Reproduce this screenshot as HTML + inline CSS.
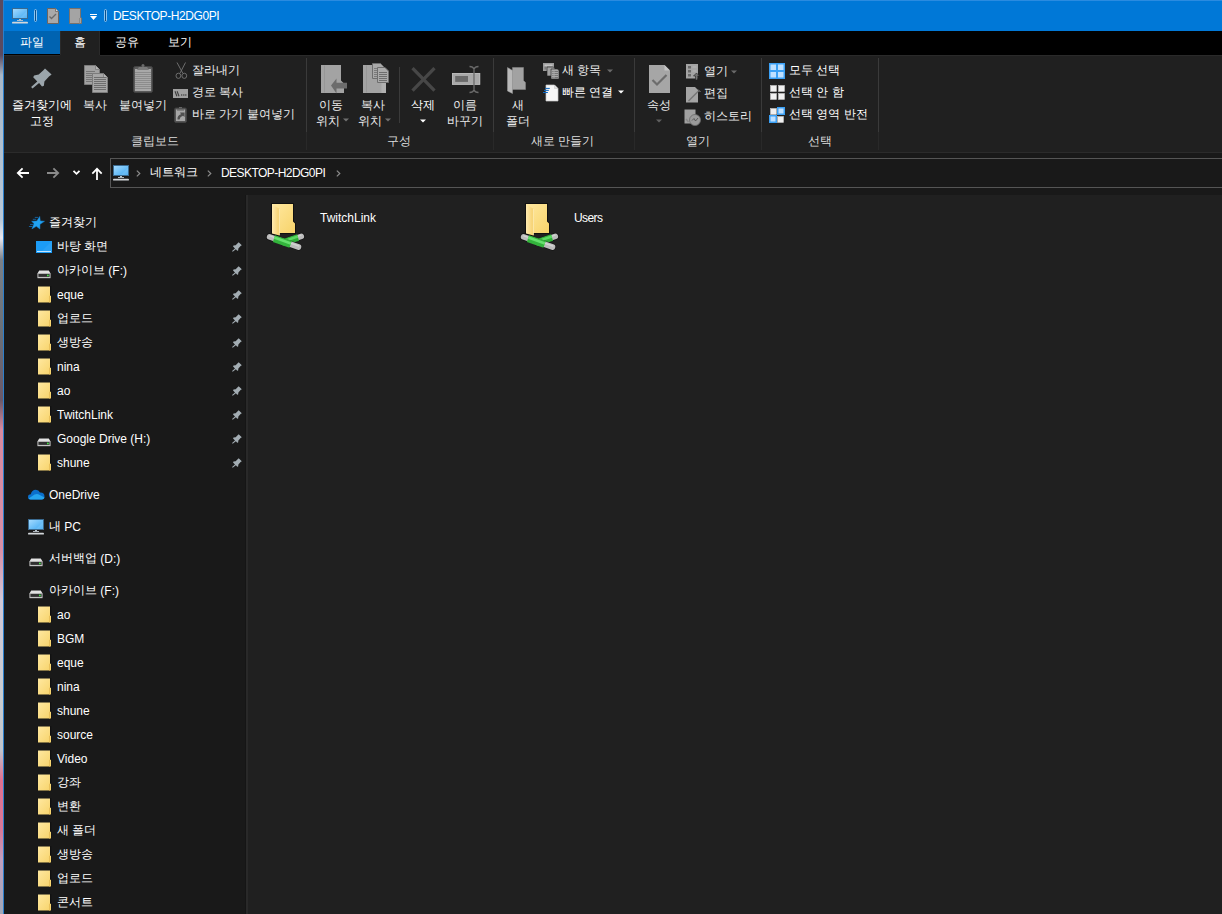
<!DOCTYPE html>
<html><head><meta charset="utf-8">
<style>
*{margin:0;padding:0;box-sizing:border-box}
html,body{width:1222px;height:914px;overflow:hidden;background:#191919}
body{position:relative;font-family:"Liberation Sans",sans-serif;font-size:12px;color:#fff}
.a{position:absolute}
.t{position:absolute;white-space:nowrap;line-height:14px}
.g{color:#ececec}
.gl{color:#dedede}
.e{position:relative;top:1px}
svg{position:absolute;overflow:visible}
</style></head><body>
<svg width="0" height="0" style="position:absolute">
<defs>
<linearGradient id="scr" x1="0" y1="0" x2="1" y2="1"><stop offset="0" stop-color="#a8dcff"/><stop offset="1" stop-color="#39a6f2"/></linearGradient>
<linearGradient id="fy" x1="0" y1="0" x2="1" y2="1"><stop offset="0" stop-color="#ffe8a0"/><stop offset="1" stop-color="#f7d36a"/></linearGradient>
<linearGradient id="fy2" x1="0" y1="0" x2="1" y2="0"><stop offset="0" stop-color="#ffeab0"/><stop offset="1" stop-color="#f5cf6a"/></linearGradient>
<linearGradient id="gr" x1="0" y1="0" x2="0" y2="1"><stop offset="0" stop-color="#8ee07e"/><stop offset="0.5" stop-color="#36c23a"/><stop offset="1" stop-color="#1e8f2a"/></linearGradient>
<linearGradient id="gy" x1="0" y1="0" x2="0" y2="1"><stop offset="0" stop-color="#e8e8e8"/><stop offset="1" stop-color="#9a9a9a"/></linearGradient>
<symbol id="pc" viewBox="0 0 16 16">
 <rect x="0.5" y="0.5" width="15" height="10" fill="url(#scr)" stroke="#3a6a90" stroke-width="1"/>
 <path d="M8 10 L15 3 V10 Z" fill="#fff" opacity="0.12"/>
 <rect x="7" y="11" width="2" height="1.2" fill="#b8c4cc"/>
 <rect x="5" y="12" width="6" height="0.9" fill="#c0c8d0"/>
 <rect x="0" y="13.8" width="16" height="1.8" rx="0.9" fill="#d2d6da"/>
</symbol>
<symbol id="pin" viewBox="0 0 21 21">
 <path d="M14 0.4 L20.6 6.6 L18 8.6 L13.4 13.6 L12.9 17.7 L11 18.4 L8.1 15.1 L1.5 20.4 L0.1 19.1 L6.3 13.6 L2.2 9.2 L3.1 7.4 L7.7 6.6 L12.4 2.2 Z"/>
</symbol>
<symbol id="fold" viewBox="0 0 14 17">
 <rect x="0" y="0" width="14" height="17" fill="#0c0c0c" opacity="0.6"/>
 <path d="M0.5 0.5 H12.5 V9.5 L13.5 10 V16.5 H0.5 Z" fill="url(#fy)"/>
 <path d="M11.5 10 L12.5 9.5 V16.5 H11.5 Z" fill="#e9c05a"/>
</symbol>
<symbol id="drv" viewBox="0 0 14 9">
 <path d="M1.8 0 H12.2 L14 3.2 V8.6 H0 V3.2 Z" fill="#0a0a0a" opacity="0.6"/>
 <path d="M2.2 0.4 H11.8 L13.6 3.4 H0.4 Z" fill="#e2e2e2"/>
 <rect x="0.4" y="3.2" width="13.2" height="5" fill="#c4c4c4"/>
 <rect x="1.4" y="4" width="11.2" height="2.9" fill="#303030"/>
 <circle cx="10.9" cy="5.45" r="0.9" fill="#44f04a"/>
</symbol>
<symbol id="netf" viewBox="0 0 44 56">
 <path d="M6 5 H29 V23 L31 25.5 V36 H15 V38.5 L6 36.5 Z" fill="#0b0b0b" opacity="0.75"/>
 <path d="M7 6 H28 V23.5 L30 25.5 V35 H7 Z" fill="url(#fy)"/>
 <path d="M7 6.2 L14.6 11 V37.4 L7 35.5 Z" fill="url(#fy2)"/>
 <path d="M14.4 11 V37.2" stroke="#fff1c4" stroke-width="0.7"/>
 <path d="M18.3 44.4 L36.3 38.3" stroke="#050505" stroke-width="7" stroke-linecap="round" opacity="0.5"/>
 <path d="M18.3 44.4 L36.3 38.3" stroke="#bcbcbc" stroke-width="5.6" stroke-linecap="round"/>
 <path d="M18 43.3 L36 37.2" stroke="#d2d2d2" stroke-width="1.4" stroke-linecap="round"/>
 <path d="M17 44.9 L33 39.5" stroke="#2fae38" stroke-width="6.8"/>
 <path d="M16.8 43.9 L32.8 38.5" stroke="#5ad862" stroke-width="2.4"/>
 <path d="M4.6 38.9 L33.5 49" stroke="#050505" stroke-width="7" stroke-linecap="round" opacity="0.5"/>
 <path d="M4.6 38.9 L33.5 49" stroke="#bcbcbc" stroke-width="5.6" stroke-linecap="round"/>
 <path d="M4.9 37.9 L33.8 48" stroke="#d2d2d2" stroke-width="1.4" stroke-linecap="round"/>
 <path d="M9 40.6 L25.6 46.4" stroke="#33b43c" stroke-width="7"/>
 <path d="M9.3 39.6 L25.9 45.4" stroke="#66e06e" stroke-width="2.6"/>
</symbol>
</defs>
</svg>
<!-- desktop strip -->
<div class="a" style="left:0;top:0;width:3px;height:914px;background:linear-gradient(#5a4a60 0,#5a4a60 55px,#a8b8c8 75px,#b8c8d8 220px,#e8e8f0 238px,#7a8088 260px,#6a7078 330px,#6a5868 400px,#d88aa0 430px,#d890a8 550px,#d0c8d8 600px,#c8ccd0 700px,#c0c4cc 750px,#e07090 780px,#d87898 830px,#c0a0c0 860px,#a0a8b8 914px)"></div>
<div class="a" style="left:3px;top:0;width:1px;height:914px;background:#2b7fcb"></div>

<!-- title bar -->
<div class="a" style="left:4px;top:0;width:1218px;height:31px;background:#0078d7"></div>
<div class="a" style="left:4px;top:0;width:1218px;height:1px;background:#2a8be0"></div>
<svg style="left:12px;top:8px" width="16" height="16"><use href="#pc"/></svg>
<div class="a" style="left:34px;top:9px;width:3px;height:13px;border:1px solid #8cc4f0;border-radius:1.5px;background:#0a4f8a"></div>
<svg style="left:47px;top:8px" width="12" height="16" viewBox="0 0 12 16">
 <path d="M0.5 0.5 H8.5 L11.5 3.5 V15.5 H0.5 Z" fill="#a9a9a9" stroke="#6d6560" stroke-width="1"/>
 <path d="M8.5 0.5 V3.5 H11.5" fill="#d8d8d8" stroke="#6d6560" stroke-width="0.8"/>
 <path d="M2.5 8.5 L4.5 10.5 L9 6" fill="none" stroke="#6a6a6a" stroke-width="1.3"/>
</svg>
<svg style="left:69px;top:8px" width="13" height="16" viewBox="0 0 13 16">
 <path d="M0.5 0.5 H11.5 V9.5 L12.5 10 V15.5 H0.5 Z" fill="#a4a4a4" stroke="#7a726c" stroke-width="1"/>
 <path d="M10.5 10 V15.5" stroke="#8a8a8a" stroke-width="1"/>
</svg>
<div class="a" style="left:90px;top:14px;width:7px;height:1px;background:#fff"></div>
<svg style="left:90px;top:16px" width="7" height="4" viewBox="0 0 7 4"><path d="M0 0 H7 L3.5 4 Z" fill="#fff"/></svg>
<div class="a" style="left:104px;top:9px;width:3px;height:13px;border:1px solid #8cc4f0;border-radius:1.5px;background:#0a4f8a"></div>
<div class="t" style="left:113px;top:9px;letter-spacing:-0.42px">DESKTOP-H2DG0PI</div>

<!-- tabs -->
<div class="a" style="left:4px;top:31px;width:1218px;height:24px;background:#000"></div>
<div class="a" style="left:4px;top:31px;width:56px;height:23px;background:#0063b1"></div>
<div class="a" style="left:60px;top:31px;width:40px;height:25px;background:#202020"></div>
<div class="t" style="left:20px;top:35px">파일</div>
<div class="t" style="left:74px;top:35px">홈</div>
<div class="t" style="left:115px;top:35px">공유</div>
<div class="t" style="left:168px;top:35px">보기</div>

<!-- ribbon -->
<div class="a" style="left:4px;top:55px;width:1218px;height:97px;background:#202020"></div>
<div class="a" style="left:4px;top:55px;width:56px;height:1px;background:#2a2a2a"></div>
<div class="a" style="left:100px;top:55px;width:1122px;height:1px;background:#2a2a2a"></div>
<div class="a" style="left:60px;top:31px;width:1px;height:24px;background:#2a2a2a"></div>
<div class="a" style="left:99px;top:31px;width:1px;height:24px;background:#2a2a2a"></div>
<div class="a" style="left:4px;top:152px;width:1218px;height:1px;background:#2b2b2b"></div>

<!-- address row -->
<div class="a" style="left:4px;top:153px;width:1218px;height:42px;background:#191919"></div>
<div class="a" style="left:110px;top:158px;width:1120px;height:30px;border:1px solid #555;background:#191919"></div>

<!-- nav pane -->
<div class="a" style="left:4px;top:195px;width:243px;height:719px;background:#191919"></div>
<!-- content -->
<div class="a" style="left:247px;top:195px;width:975px;height:719px;background:#202020"></div>
<!-- ===== clipboard group ===== -->
<svg style="left:31px;top:68px;fill:#9ba5ab" width="21" height="21"><use href="#pin"/></svg>
<div class="t" style="left:12px;top:98px">즐겨찾기에</div>
<div class="t" style="left:30px;top:114px">고정</div>
<!-- copy icon -->
<svg style="left:84px;top:65px" width="24" height="28" viewBox="0 0 24 28">
 <path d="M0.5 0.5 H11.5 L15.5 4.5 V19.5 H0.5 Z" fill="#a2a2a2" stroke="#7c7c7c"/>
 <path d="M11.5 0.5 V4.5 H15.5" fill="#b4b4b4" stroke="#7c7c7c" stroke-width="0.8"/>
 <g stroke="#767676" stroke-width="1"><path d="M2 6.5 H11 M2 8.5 H11 M2 10.5 H11 M2 12.5 H11 M2 14.5 H11 M2 16.5 H11"/></g>
 <path d="M8.5 8.5 H19.5 L23.5 12.5 V27.5 H8.5 Z" fill="#a6a6a6" stroke="#7c7c7c"/>
 <path d="M19.5 8.5 V12.5 H23.5" fill="#b4b4b4" stroke="#7c7c7c" stroke-width="0.8"/>
 <g stroke="#6e6e6e" stroke-width="1"><path d="M10 12.5 H22 M10 14.5 H22 M10 16.5 H22 M10 18.5 H22 M10 20.5 H22 M10 22.5 H22 M10 24.5 H22"/></g>
</svg>
<div class="t g" style="left:83px;top:98px">복사</div>
<!-- paste icon -->
<svg style="left:133px;top:63px" width="20" height="30" viewBox="0 0 20 30">
 <rect x="0.5" y="3.5" width="19" height="26" rx="2" fill="#5a5a5a" stroke="#444"/>
 <rect x="2" y="6" width="16" height="22" fill="#a8a8a8"/>
 <g stroke="#8c8c8c" stroke-width="1"><path d="M2 9.5 H18 M2 11.5 H18 M2 13.5 H18 M2 15.5 H18 M2 17.5 H18 M2 19.5 H18 M2 21.5 H18 M2 23.5 H18 M2 25.5 H18"/></g>
 <path d="M4 7 L6 4 H14 L16 7 Z" fill="#7a7a7a"/>
 <rect x="8.5" y="1" width="3" height="3" rx="1.5" fill="#6a6a6a"/>
</svg>
<div class="t g" style="left:119px;top:98px">붙여넣기</div>
<!-- scissors -->
<svg style="left:175px;top:62px" width="13" height="17" viewBox="0 0 13 17" fill="none" stroke="#767676" stroke-width="0.9">
 <path d="M2 0.5 L7.8 11.2 M10.5 0.5 L5 11.2"/>
 <ellipse cx="3.4" cy="13.8" rx="2.4" ry="2.6"/><ellipse cx="9.3" cy="13.8" rx="2.4" ry="2.6"/>
</svg>
<div class="t g" style="left:192px;top:63px">잘라내기</div>
<!-- copy path -->
<svg style="left:173px;top:89px" width="15" height="9" viewBox="0 0 15 9">
 <rect x="0" y="0" width="15" height="9" fill="#a0a0a0"/>
 <path d="M2 2.2 L3.9 7.2 M4.1 2.2 L6 7.2" stroke="#3c3c3c" stroke-width="1.1"/>
 <g fill="#3c3c3c"><circle cx="8.7" cy="5.9" r="0.75"/><circle cx="10.8" cy="5.9" r="0.75"/><circle cx="12.8" cy="5.9" r="0.75"/></g>
</svg>
<div class="t g" style="left:192px;top:85px">경로 복사</div>
<!-- paste shortcut -->
<svg style="left:174px;top:107px" width="13" height="16" viewBox="0 0 13 16">
 <rect x="0.5" y="1" width="12" height="14.5" rx="1.5" fill="#555" stroke="#444" stroke-width="0.8"/>
 <rect x="2" y="2.5" width="9" height="11.5" fill="#a6a6a6"/>
 <rect x="3" y="2.5" width="7" height="1" fill="#5a5a5a"/>
 <rect x="5" y="0" width="3" height="1.2" fill="#666"/>
 <path d="M3.5 12.5 Q3 8.5 7 7.2 L6 5.6 H10.6 V10 L9 8.8 Q6 9.5 5.5 12.5 Z" fill="#505050"/>
</svg>
<div class="t g" style="left:192px;top:107px">바로 가기 붙여넣기</div>
<div class="t gl" style="left:131px;top:134px">클립보드</div>
<div class="a" style="left:306px;top:58px;width:1px;height:74px;background:#3a3a3a"></div><div class="a" style="left:306px;top:132px;width:1px;height:18px;background:#292929"></div>

<!-- ===== organize group ===== -->
<svg style="left:321px;top:65px" width="28" height="30" viewBox="0 0 28 30">
 <path d="M0 0 H20 V15.5 L23 18.5 V28 H0 Z" fill="#a3a3a3"/>
 <path d="M3.5 0.5 V27.5" stroke="#979797" stroke-width="1"/>
 <path d="M10 20.5 L15.5 13.5 V17.8 H26 V23.5 H15.5 V28.5 Z" fill="#6c6c6c"/>
</svg>
<div class="t g" style="left:319px;top:98px">이동</div>
<div class="t g" style="left:316px;top:114px">위치</div>
<svg style="left:343px;top:118px" width="6" height="4" viewBox="0 0 6 4"><path d="M0 0.5 H6 L3 3.5 Z" fill="#707070"/></svg>
<svg style="left:362px;top:62px" width="28" height="32" viewBox="0 0 28 32">
 <path d="M1 3 H21 V18.5 L24 21.5 V31 H1 Z" fill="#a3a3a3"/>
 <path d="M4.5 3.5 V30.5" stroke="#979797" stroke-width="1"/>
 <path d="M19.5 21 H24 V31 H19.5 Z" fill="#b0b0b0"/>
 <path d="M10.5 1.5 H18.5 L21.5 4.5 V16.5 H10.5 Z" fill="#a8a8a8" stroke="#6e6e6e"/>
 <g stroke="#7a7a7a"><path d="M12 6.5 H19.5 M12 8.5 H19.5 M12 10.5 H19.5 M12 12.5 H19.5 M12 14.5 H19.5"/></g>
 <path d="M15.5 5.5 H23 L26.5 9 V20.5 H15.5 Z" fill="#ababab" stroke="#6e6e6e"/>
 <g stroke="#6e6e6e"><path d="M17 10.5 H25 M17 12.5 H25 M17 14.5 H25 M17 16.5 H25 M17 18.5 H25"/></g>
</svg>
<div class="t g" style="left:361px;top:98px">복사</div>
<div class="t g" style="left:358px;top:114px">위치</div>
<svg style="left:385px;top:118px" width="6" height="4" viewBox="0 0 6 4"><path d="M0 0.5 H6 L3 3.5 Z" fill="#707070"/></svg>
<div class="a" style="left:399px;top:67px;width:1px;height:56px;background:#3a3a3a"></div>
<svg style="left:411px;top:67px" width="25" height="25" viewBox="0 0 25 25">
 <path d="M1.5 1.2 L23.5 23.6 M23.5 1.2 L1.5 23.6" stroke="#474747" stroke-width="3.3"/>
</svg>
<div class="t" style="left:411px;top:98px">삭제</div>
<svg style="left:420px;top:119px" width="6" height="4" viewBox="0 0 6 4"><path d="M0 0.5 H6 L3 3.5 Z" fill="#fff"/></svg>
<svg style="left:452px;top:66px" width="29" height="27" viewBox="0 0 29 27">
 <rect x="0" y="7" width="28.2" height="11.8" fill="#a8a8a8"/>
 <rect x="0.5" y="7.5" width="27.2" height="10.8" fill="none" stroke="#bcbcbc" stroke-width="0.8"/>
 <rect x="3.2" y="10" width="12.8" height="5.9" fill="#6a6a6a"/>
 <path d="M17.5 0.5 Q21 0.5 22 3 Q23 0.5 26.5 0.5 M22 3 V24 M17.5 26.5 Q21 26.5 22 24 Q23 26.5 26.5 26.5" fill="none" stroke="#6a6a6a" stroke-width="1.3"/>
</svg>
<div class="t g" style="left:453px;top:98px">이름</div>
<div class="t g" style="left:447px;top:114px">바꾸기</div>
<div class="t gl" style="left:387px;top:134px">구성</div>
<div class="a" style="left:493px;top:58px;width:1px;height:74px;background:#3a3a3a"></div><div class="a" style="left:493px;top:132px;width:1px;height:18px;background:#292929"></div>

<!-- ===== new group ===== -->
<svg style="left:507px;top:67px" width="20" height="27" viewBox="0 0 20 27">
 <path d="M5.5 0.5 H16.5 V13.5 L18.5 15.5 V22.5 H5.5 Z" fill="#a2a2a2" stroke="#8c8c8c" stroke-width="0.5"/>
 <path d="M0.5 0.5 L5.5 3.5 V26.5 L0.5 24 Z" fill="#b9b9b9" stroke="#9a9a9a" stroke-width="0.5"/>
</svg>
<div class="t g" style="left:512px;top:98px">새</div>
<div class="t g" style="left:506px;top:114px">폴더</div>
<svg style="left:543px;top:63px" width="16" height="17" viewBox="0 0 16 17">
 <rect x="0" y="0" width="11" height="8" fill="#9c9c9c"/>
 <rect x="1.5" y="1.5" width="8" height="1.5" fill="#c4c4c4"/>
 <rect x="1.5" y="4" width="1.5" height="2.5" fill="#7a7a7a"/>
 <path d="M4 4 H10.5 L12 5.5 V13 H4 Z" fill="#a2a2a2" stroke="#202020" stroke-width="0.6"/>
 <path d="M8 6 H14.5 L16 7.5 V16 H8 Z" fill="#a8a8a8" stroke="#202020" stroke-width="0.6"/>
 <g stroke="#6e6e6e" stroke-width="0.9"><path d="M9.3 8.5 H10.5 M11.5 8.5 H15 M9.3 10.5 H10.5 M11.5 10.5 H15 M9.3 12.5 H10.5 M11.5 12.5 H15 M9.3 14.5 H10.5 M11.5 14.5 H15"/></g>
</svg>
<div class="t g" style="left:562px;top:63px">새 항목</div>
<svg style="left:607px;top:69px" width="6" height="4" viewBox="0 0 6 4"><path d="M0 0.5 H6 L3 3.5 Z" fill="#6a6a6a"/></svg>
<svg style="left:543px;top:84px" width="16" height="18" viewBox="0 0 16 18">
 <path d="M3 1 H11.5 L15 4.5 V17 H3 Z" fill="#f6f6f6" stroke="#c8c8c8" stroke-width="0.7"/>
 <path d="M11.5 1 V4.5 H15" fill="#e0e0e0" stroke="#c8c8c8" stroke-width="0.6"/>
 <path d="M2.2 4.4 H6.8 M1 6.4 H5.8 M0 8.5 H4.9" stroke="#0b66c2" stroke-width="1"/>
</svg>
<div class="t" style="left:562px;top:85px">빠른 연결</div>
<svg style="left:618px;top:90px" width="6" height="4" viewBox="0 0 6 4"><path d="M0 0.5 H6 L3 3.5 Z" fill="#fff"/></svg>
<div class="t gl" style="left:531px;top:134px">새로 만들기</div>
<div class="a" style="left:634px;top:58px;width:1px;height:74px;background:#3a3a3a"></div><div class="a" style="left:634px;top:132px;width:1px;height:18px;background:#292929"></div>

<!-- ===== open group ===== -->
<svg style="left:649px;top:65px" width="22" height="29" viewBox="0 0 22 29">
 <path d="M0 0 H15.5 L21 5.5 V28 H0 Z" fill="#a6a6a6"/>
 <path d="M15.5 0 V5.5 H21 Z" fill="#c4c4c4"/>
 <path d="M3.5 15 L8 19.5 L17.5 10" fill="none" stroke="#6c6c6c" stroke-width="2.2"/>
</svg>
<div class="t g" style="left:647px;top:98px">속성</div>
<svg style="left:656px;top:119px" width="6" height="4" viewBox="0 0 6 4"><path d="M0 0.5 H6 L3 3.5 Z" fill="#606060"/></svg>
<svg style="left:686px;top:64px" width="15" height="17" viewBox="0 0 15 17">
 <rect x="0" y="0" width="12" height="14.5" fill="#a4a4a4"/>
 <g fill="#6a6a6a"><rect x="2" y="2" width="3" height="2.5"/><rect x="2" y="6" width="3" height="2.5"/><rect x="2" y="10" width="3" height="2.5"/></g>
 <g stroke="#bdbdbd" stroke-width="0.8"><path d="M6.5 3 H10.5 M6.5 7 H10.5"/></g>
 <path d="M9.5 16 V12 H7.5 L10.5 9 L13.5 12 H11.5 V16 Z" fill="#747474" stroke="#202020" stroke-width="0.6"/>
</svg>
<div class="t g" style="left:704px;top:64px">열기</div>
<svg style="left:731px;top:70px" width="6" height="4" viewBox="0 0 6 4"><path d="M0 0.5 H6 L3 3.5 Z" fill="#6a6a6a"/></svg>
<svg style="left:686px;top:87px" width="16" height="16" viewBox="0 0 16 16">
 <path d="M0 0 H9 L12 3 V15.5 H0 Z" fill="#a4a4a4"/>
 <path d="M2.5 14 L12.5 4" stroke="#767676" stroke-width="1.4"/>
 <path d="M12 2.5 L14.5 5" stroke="#8a8a8a" stroke-width="1"/>
</svg>
<div class="t g" style="left:704px;top:86px">편집</div>
<svg style="left:684px;top:109px" width="17" height="17" viewBox="0 0 17 17">
 <rect x="0.5" y="0.5" width="11" height="14" fill="#a0a0a0"/>
 <circle cx="11" cy="11" r="5.5" fill="#9a9a9a" stroke="#6a6a6a" stroke-width="0.8"/>
 <path d="M8 11.5 L10 9.5 L11.5 12 L14 9" fill="none" stroke="#4a4a4a" stroke-width="0.8"/>
 <path d="M2 10 L4.5 13" stroke="#888" stroke-width="1.5"/>
</svg>
<div class="t g" style="left:704px;top:109px">히스토리</div>
<div class="t gl" style="left:686px;top:134px">열기</div>
<div class="a" style="left:761px;top:58px;width:1px;height:74px;background:#3a3a3a"></div><div class="a" style="left:761px;top:132px;width:1px;height:18px;background:#292929"></div>

<!-- ===== select group ===== -->
<svg style="left:769px;top:63px" width="16" height="16" viewBox="0 0 16 16">
 <rect x="0" y="0" width="16" height="16" fill="#3aa0f5"/>
 <g fill="#bfe0ff"><rect x="1.5" y="1.5" width="5.5" height="5.5"/><rect x="9" y="1.5" width="5.5" height="5.5"/><rect x="1.5" y="9" width="5.5" height="5.5"/><rect x="9" y="9" width="5.5" height="5.5"/></g>
</svg>
<div class="t" style="left:789px;top:63px">모두 선택</div>
<svg style="left:770px;top:85px" width="15" height="15" viewBox="0 0 15 15">
 <g fill="#f0f0f0" stroke="#c8c8c8" stroke-width="0.6"><rect x="0.5" y="0.5" width="6" height="6"/><rect x="8.5" y="0.5" width="6" height="6"/><rect x="0.5" y="8.5" width="6" height="6"/><rect x="8.5" y="8.5" width="6" height="6"/></g>
</svg>
<div class="t" style="left:789px;top:85px">선택 안 함</div>
<svg style="left:769px;top:107px" width="16" height="16" viewBox="0 0 16 16">
 <g fill="#f0f0f0" stroke="#c8c8c8" stroke-width="0.6"><rect x="1.5" y="1.5" width="6" height="6"/><rect x="8.5" y="9.5" width="6" height="6"/></g>
 <rect x="8" y="0" width="8" height="8" fill="#3aa0f5"/><rect x="9.5" y="1.5" width="5" height="5" fill="#bfe0ff"/>
 <rect x="0" y="8" width="8" height="8" fill="#3aa0f5"/><rect x="1.5" y="9.5" width="5" height="5" fill="#bfe0ff"/>
</svg>
<div class="t" style="left:789px;top:107px">선택 영역 반전</div>
<div class="t gl" style="left:808px;top:134px">선택</div>
<div class="a" style="left:878px;top:58px;width:1px;height:74px;background:#3a3a3a"></div><div class="a" style="left:878px;top:132px;width:1px;height:18px;background:#292929"></div>
<!-- nav buttons -->
<svg style="left:16px;top:167px" width="14" height="12" viewBox="0 0 14 12" fill="none" stroke="#fff" stroke-width="1.8">
 <path d="M13 6 H2.2 M6.6 1.3 L1.8 6 L6.6 10.7"/>
</svg>
<svg style="left:46px;top:167px" width="14" height="12" viewBox="0 0 14 12" fill="none" stroke="#8a8a8a" stroke-width="1.8">
 <path d="M1 6 H11.8 M7.4 1.3 L12.2 6 L7.4 10.7"/>
</svg>
<svg style="left:73px;top:170px" width="7" height="5" viewBox="0 0 7 5" fill="none" stroke="#fff" stroke-width="1.8">
 <path d="M0.5 0.8 L3.5 3.8 L6.5 0.8"/>
</svg>
<svg style="left:91px;top:167px" width="12" height="14" viewBox="0 0 12 14" fill="none" stroke="#fff" stroke-width="1.8">
 <path d="M6 13 V2.2 M1.3 6.6 L6 1.8 L10.7 6.6"/>
</svg>
<svg style="left:113px;top:165px" width="16" height="16"><use href="#pc"/></svg>
<svg style="left:136px;top:170px" width="5" height="7" viewBox="0 0 5 7" fill="none" stroke="#8a8a8a" stroke-width="1.2"><path d="M0.8 0.6 L3.8 3.5 L0.8 6.4"/></svg>
<div class="t" style="left:150px;top:165px">네트워크</div>
<svg style="left:207px;top:170px" width="5" height="7" viewBox="0 0 5 7" fill="none" stroke="#8a8a8a" stroke-width="1.2"><path d="M0.8 0.6 L3.8 3.5 L0.8 6.4"/></svg>
<div class="t" style="left:221px;top:166px;letter-spacing:-0.55px">DESKTOP-H2DG0PI</div>
<svg style="left:336px;top:170px" width="5" height="7" viewBox="0 0 5 7" fill="none" stroke="#8a8a8a" stroke-width="1.2"><path d="M0.8 0.6 L3.8 3.5 L0.8 6.4"/></svg>
<!-- nav -->
<svg style="left:26px;top:212px" width="22" height="20" viewBox="0 0 22 20"><path d="M13.7 4.4 L14.3 8.9 L18.5 9.3 L14 12.3 L13.9 17 L10.3 14.3 L5.9 16.9 L8 11.6 L5.6 9.3 L10.8 9 Z" fill="#22a3f2" stroke="#1583d6" stroke-width="0.5" stroke-linejoin="round"/><path d="M9.2 5.4 H11.8 M7.2 7.3 H9.8 M4.4 12.4 H6.8 M3.3 14.5 H5.9" stroke="#1670b8" stroke-width="0.8" stroke-linecap="round"/></svg>
<div class="t" style="left:49px;top:215px">즐겨찾기</div>
<svg style="left:36px;top:241px" width="16" height="12" viewBox="0 0 16 12"><rect x="0" y="0" width="16" height="12" fill="#1c9cf6"/><path d="M6 10 L15 1 H16 V10 Z" fill="#fff" opacity="0.06"/><rect x="1" y="10" width="14" height="0.9" fill="#d8eeff"/></svg>
<div class="t" style="left:57px;top:239px">바탕 화면</div>
<svg style="left:232px;top:242px;fill:#a3adb3" width="10" height="10" viewBox="0 0 21 21"><use href="#pin"/></svg>
<svg style="left:37px;top:270px" width="14" height="9"><use href="#drv"/></svg>
<div class="t" style="left:57px;top:263px">아카이브 <span class="e">(F:)</span></div>
<svg style="left:232px;top:266px;fill:#a3adb3" width="10" height="10" viewBox="0 0 21 21"><use href="#pin"/></svg>
<svg style="left:37px;top:286px" width="15" height="17" viewBox="0 0 14 17"><use href="#fold"/></svg>
<div class="t" style="left:57px;top:288px">eque</div>
<svg style="left:232px;top:290px;fill:#a3adb3" width="10" height="10" viewBox="0 0 21 21"><use href="#pin"/></svg>
<svg style="left:37px;top:310px" width="15" height="17" viewBox="0 0 14 17"><use href="#fold"/></svg>
<div class="t" style="left:57px;top:311px">업로드</div>
<svg style="left:232px;top:314px;fill:#a3adb3" width="10" height="10" viewBox="0 0 21 21"><use href="#pin"/></svg>
<svg style="left:37px;top:334px" width="15" height="17" viewBox="0 0 14 17"><use href="#fold"/></svg>
<div class="t" style="left:57px;top:335px">생방송</div>
<svg style="left:232px;top:338px;fill:#a3adb3" width="10" height="10" viewBox="0 0 21 21"><use href="#pin"/></svg>
<svg style="left:37px;top:358px" width="15" height="17" viewBox="0 0 14 17"><use href="#fold"/></svg>
<div class="t" style="left:57px;top:360px">nina</div>
<svg style="left:232px;top:362px;fill:#a3adb3" width="10" height="10" viewBox="0 0 21 21"><use href="#pin"/></svg>
<svg style="left:37px;top:382px" width="15" height="17" viewBox="0 0 14 17"><use href="#fold"/></svg>
<div class="t" style="left:57px;top:384px">ao</div>
<svg style="left:232px;top:386px;fill:#a3adb3" width="10" height="10" viewBox="0 0 21 21"><use href="#pin"/></svg>
<svg style="left:37px;top:406px" width="15" height="17" viewBox="0 0 14 17"><use href="#fold"/></svg>
<div class="t" style="left:57px;top:408px">TwitchLink</div>
<svg style="left:232px;top:410px;fill:#a3adb3" width="10" height="10" viewBox="0 0 21 21"><use href="#pin"/></svg>
<svg style="left:37px;top:438px" width="14" height="9"><use href="#drv"/></svg>
<div class="t" style="left:57px;top:432px">Google Drive (H:)</div>
<svg style="left:232px;top:434px;fill:#a3adb3" width="10" height="10" viewBox="0 0 21 21"><use href="#pin"/></svg>
<svg style="left:37px;top:454px" width="15" height="17" viewBox="0 0 14 17"><use href="#fold"/></svg>
<div class="t" style="left:57px;top:456px">shune</div>
<svg style="left:232px;top:458px;fill:#a3adb3" width="10" height="10" viewBox="0 0 21 21"><use href="#pin"/></svg>
<svg style="left:28px;top:489px" width="17" height="12" viewBox="0 0 17 12"><path d="M2.5 10.5 Q0 10.5 0 8 Q0 5.5 2.8 5.3 Q3.8 1 7.8 0.8 Q10.8 0.8 12 3.6 Q16.5 3.4 16.5 7.5 Q16.5 10.5 13.5 10.5 Z" fill="#0b6fcb"/><path d="M0.6 9.5 Q1.3 10.6 2.8 10.6 H14 Q16 10.6 16.5 8.5 L10.3 5.2 Q8.5 4.6 6.5 5.6 Z" fill="#25a4ee"/></svg>
<div class="t" style="left:49px;top:488px">OneDrive</div>
<svg style="left:28px;top:519px" width="16" height="16"><use href="#pc"/></svg>
<div class="t" style="left:49px;top:519px">내 <span class="e">PC</span></div>
<svg style="left:29px;top:558px" width="14" height="9"><use href="#drv"/></svg>
<div class="t" style="left:49px;top:551px">서버백업 <span class="e">(D:)</span></div>
<svg style="left:29px;top:590px" width="14" height="9"><use href="#drv"/></svg>
<div class="t" style="left:49px;top:583px">아카이브 <span class="e">(F:)</span></div>
<svg style="left:37px;top:606px" width="15" height="17" viewBox="0 0 14 17"><use href="#fold"/></svg>
<div class="t" style="left:57px;top:608px">ao</div>
<svg style="left:37px;top:630px" width="15" height="17" viewBox="0 0 14 17"><use href="#fold"/></svg>
<div class="t" style="left:57px;top:632px">BGM</div>
<svg style="left:37px;top:654px" width="15" height="17" viewBox="0 0 14 17"><use href="#fold"/></svg>
<div class="t" style="left:57px;top:656px">eque</div>
<svg style="left:37px;top:678px" width="15" height="17" viewBox="0 0 14 17"><use href="#fold"/></svg>
<div class="t" style="left:57px;top:680px">nina</div>
<svg style="left:37px;top:702px" width="15" height="17" viewBox="0 0 14 17"><use href="#fold"/></svg>
<div class="t" style="left:57px;top:704px">shune</div>
<svg style="left:37px;top:726px" width="15" height="17" viewBox="0 0 14 17"><use href="#fold"/></svg>
<div class="t" style="left:57px;top:728px">source</div>
<svg style="left:37px;top:750px" width="15" height="17" viewBox="0 0 14 17"><use href="#fold"/></svg>
<div class="t" style="left:57px;top:752px">Video</div>
<svg style="left:37px;top:774px" width="15" height="17" viewBox="0 0 14 17"><use href="#fold"/></svg>
<div class="t" style="left:57px;top:775px">강좌</div>
<svg style="left:37px;top:798px" width="15" height="17" viewBox="0 0 14 17"><use href="#fold"/></svg>
<div class="t" style="left:57px;top:799px">변환</div>
<svg style="left:37px;top:822px" width="15" height="17" viewBox="0 0 14 17"><use href="#fold"/></svg>
<div class="t" style="left:57px;top:823px">새 폴더</div>
<svg style="left:37px;top:846px" width="15" height="17" viewBox="0 0 14 17"><use href="#fold"/></svg>
<div class="t" style="left:57px;top:847px">생방송</div>
<svg style="left:37px;top:870px" width="15" height="17" viewBox="0 0 14 17"><use href="#fold"/></svg>
<div class="t" style="left:57px;top:871px">업로드</div>
<svg style="left:37px;top:894px" width="15" height="17" viewBox="0 0 14 17"><use href="#fold"/></svg>
<div class="t" style="left:57px;top:895px">콘서트</div>
<!-- content -->
<div class="a" style="left:245px;top:195px;width:1px;height:719px;background:#151515"></div><div class="a" style="left:246px;top:195px;width:2px;height:719px;background:#292929"></div>
<svg style="left:265px;top:198px" width="44" height="56" viewBox="0 0 44 56"><use href="#netf"/></svg>
<div class="t" style="left:320px;top:211px">TwitchLink</div>
<svg style="left:519px;top:198px" width="44" height="56" viewBox="0 0 44 56"><use href="#netf"/></svg>
<div class="t" style="left:574px;top:211px;letter-spacing:-0.6px">Users</div>
</body></html>
